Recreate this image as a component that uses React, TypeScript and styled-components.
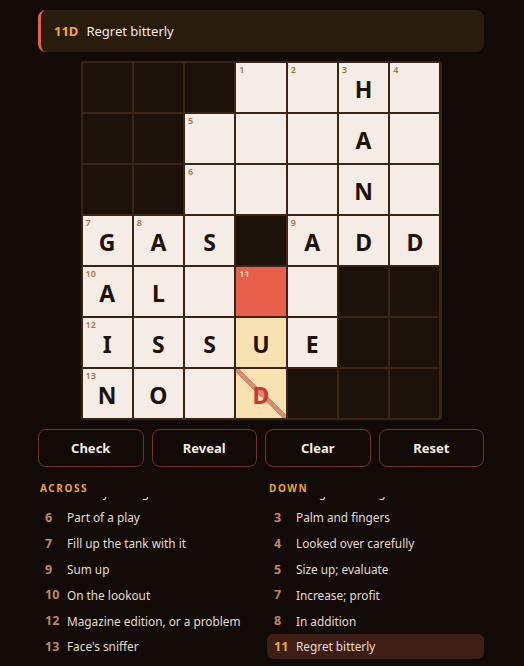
import React, { useLayoutEffect, useRef } from "react";
import styled, { createGlobalStyle, css } from "styled-components";

const GlobalStyle = createGlobalStyle`
    html, body {
        margin: 0;
        padding: 0;
        background: #110a06;
        overflow: hidden;
    }
    body {
        font-family: "Noto Sans", "Open Sans", sans-serif;
        color: #f4ece2;
    }
`;

type CellKind = "block" | "open" | "active" | "related" | "wrong";

interface Cell {
    kind: CellKind;
    letter?: string;
    num?: number;
}

const B: Cell = { kind: "block" };
const o = (letter?: string, num?: number): Cell => ({ kind: "open", letter, num });

const grid: Cell[][] = [
    [B, B, B, o("", 1), o("", 2), o("H", 3), o("", 4)],
    [B, B, o("", 5), o(), o(), o("A"), o()],
    [B, B, o("", 6), o(), o(), o("N"), o()],
    [o("G", 7), o("A", 8), o("S"), B, o("A", 9), o("D"), o("D")],
    [o("A", 10), o("L"), o(), { kind: "active", num: 11 }, o(), B, B],
    [o("I", 12), o("S"), o("S"), { kind: "related", letter: "U" }, o("E"), B, B],
    [o("N", 13), o("O"), o(), { kind: "wrong", letter: "D" }, B, B, B],
];

const across = [
    { n: 1, text: "Dull, persistent pain" },
    { n: 5, text: "Orderly arrangement" },
    { n: 6, text: "Part of a play" },
    { n: 7, text: "Fill up the tank with it" },
    { n: 9, text: "Sum up" },
    { n: 10, text: "On the lookout" },
    { n: 12, text: "Magazine edition, or a problem" },
    { n: 13, text: "Face's sniffer" },
];

const down = [
    { n: 1, text: "Curved path, like a rainbow" },
    { n: 2, text: "Bring into being" },
    { n: 3, text: "Palm and fingers" },
    { n: 4, text: "Looked over carefully" },
    { n: 5, text: "Size up; evaluate" },
    { n: 7, text: "Increase; profit" },
    { n: 8, text: "In addition" },
    { n: 11, text: "Regret bitterly", active: true },
];

// the clue lists sit scrolled so that the third clue leads
const LIST_SCROLL = 43.5;

const ClueList = ({
    title,
    clues,
}: {
    title: string;
    clues: { n: number; text: string; active?: boolean }[];
}) => {
    const ref = useRef<HTMLDivElement>(null);
    useLayoutEffect(() => {
        if (ref.current) ref.current.scrollTop = LIST_SCROLL;
    }, []);
    return (
        <Column>
            <Heading>{title}</Heading>
            <ListBox ref={ref}>
                {clues.map((c) => (
                    <ClueItem key={c.n} active={!!c.active}>
                        <ClueNum active={!!c.active}>{c.n}</ClueNum>
                        <span>{c.text}</span>
                    </ClueItem>
                ))}
            </ListBox>
        </Column>
    );
};

export default function App() {
    return (
        <>
            <GlobalStyle />
            <Page>
                <ClueBar>
                    <ClueTag>11D</ClueTag>
                    <ClueText>Regret bitterly</ClueText>
                </ClueBar>
                <Board>
                    {grid.flat().map((cell, i) => (
                        <Square key={i} kind={cell.kind}>
                            {cell.num && <Num kind={cell.kind}>{cell.num}</Num>}
                            {cell.letter && <Letter wrong={cell.kind === "wrong"}>{cell.letter}</Letter>}
                        </Square>
                    ))}
                </Board>
                <Buttons>
                    <Button>Check</Button>
                    <Button>Reveal</Button>
                    <Button>Clear</Button>
                    <Button>Reset</Button>
                </Buttons>
                <Clues>
                    <ClueList title="Across" clues={across} />
                    <ClueList title="Down" clues={down} />
                </Clues>
            </Page>
        </>
    );
}

const Page = styled.div`
    padding: 10px 40px 0 38px;
    display: flex;
    flex-direction: column;
    align-items: stretch;
`;

const ClueBar = styled.div`
    height: 42px;
    box-sizing: border-box;
    background: #2a1c0d;
    border-left: 3px solid #e65f48;
    border-radius: 8px;
    padding-left: 13px;
    display: flex;
    align-items: center;
    gap: 8px;
    font-size: 13px;
`;

const ClueTag = styled.span`
    color: #f2aa2e;
    font-weight: 700;
`;

const ClueText = styled.span`
    color: #f4ece2;
`;

const Board = styled.div`
    margin: 9px auto 0;
    width: 361px;
    height: 359px;
    box-sizing: border-box;
    padding: 2px;
    background: #3a2414;
    border-radius: 3px;
    display: grid;
    grid-template-columns: repeat(7, 1fr);
    grid-template-rows: repeat(7, 1fr);
    gap: 2px;
`;

const cellBg: Record<CellKind, string> = {
    block: "#1d120a",
    open: "#f5ede5",
    active: "#e8604b",
    related: "#f9e2b1",
    wrong: "#f9e2b1",
};

const Square = styled.div<{ kind: CellKind }>`
    position: relative;
    background: ${(p) => cellBg[p.kind]};
    display: flex;
    align-items: center;
    justify-content: center;
    ${(p) =>
        p.kind === "wrong" &&
        css`
            background: linear-gradient(
                    to top right,
                    transparent calc(50% - 2.5px),
                    #dc8a70 calc(50% - 2.5px),
                    #dc8a70 calc(50% + 2.5px),
                    transparent calc(50% + 2.5px)
                ),
                #f9e2b1;
        `}
`;

const Num = styled.span<{ kind: CellKind }>`
    position: absolute;
    top: 2px;
    left: 3px;
    font-size: 9px;
    line-height: 10px;
    font-weight: 600;
    color: ${(p) => (p.kind === "active" ? "#fbe0d6" : "#b0703c")};
`;

const Letter = styled.span<{ wrong: boolean }>`
    font-size: 23px;
    font-weight: 700;
    line-height: 1;
    margin-top: 4px;
    color: ${(p) => (p.wrong ? "#c9382c" : "#1e120a")};
`;

const Buttons = styled.div`
    margin-top: 9px;
    display: grid;
    grid-template-columns: repeat(4, 1fr);
    gap: 8px;
`;

const Button = styled.button`
    height: 38px;
    border: 1px solid #74312a;
    border-radius: 8px;
    background: transparent;
    color: #f4ece2;
    font-family: "Noto Sans", "Open Sans", sans-serif;
    font-size: 13px;
    font-weight: 700;
    padding-top: 1px;
    cursor: pointer;
`;

const Clues = styled.div`
    margin-top: 14px;
    display: grid;
    grid-template-columns: 1fr 1fr;
    gap: 12px;
`;

const Column = styled.div`
    display: flex;
    flex-direction: column;
    min-width: 0;
`;

const Heading = styled.div`
    padding-left: 2px;
    font-size: 10px;
    line-height: 14px;
    font-weight: 700;
    letter-spacing: 1.6px;
    text-transform: uppercase;
    color: #f2a526;
`;

const ListBox = styled.div`
    margin-top: 2px;
    height: 172px;
    padding-bottom: 40px;
    box-sizing: border-box;
    overflow-y: auto;
    scrollbar-width: none;
    &::-webkit-scrollbar {
        display: none;
    }
`;

const ClueItem = styled.div<{ active: boolean }>`
    display: flex;
    align-items: center;
    height: 25.8px;
    box-sizing: border-box;
    padding: 0 7px;
    border-radius: 6px;
    font-size: 11.8px;
    white-space: nowrap;
    color: #e8ddd0;
    background: ${(p) => (p.active ? "#3e1d14" : "transparent")};
`;

const ClueNum = styled.span<{ active: boolean }>`
    min-width: 16px;
    margin-right: 6px;
    font-size: 12.5px;
    font-weight: 700;
    color: ${(p) => (p.active ? "#f2aa2e" : "#c3875a")};
`;
